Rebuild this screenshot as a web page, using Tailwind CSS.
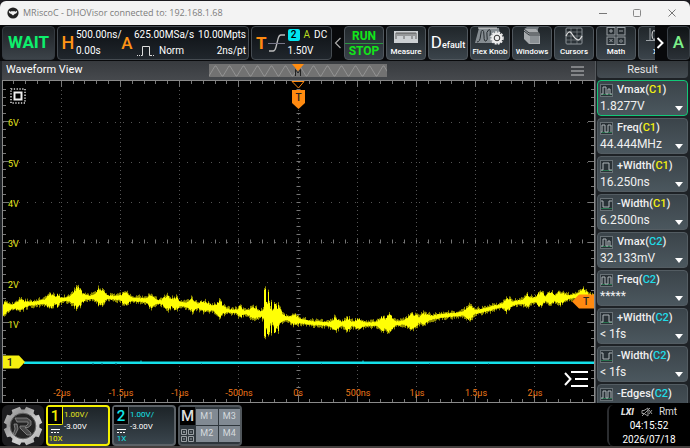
<!DOCTYPE html>
<html lang="en">
<head>
<meta charset="utf-8">
<meta name="viewport" content="width=device-width, initial-scale=1">
<title>MRiscoC - DHOVisor</title>
<script src="https://cdn.jsdelivr.net/npm/@tailwindcss/browser@4"></script>
</head>
<body class="flex h-screen flex-col overflow-hidden bg-[#1b1a1f] font-[Roboto,sans-serif] text-white select-none">

<header class="mt-px flex h-6 shrink-0 items-center rounded-t-md bg-[#f3f3f3] pl-[7px] text-[#7c7c7c]">
  <svg class="mr-1 size-3" viewBox="0 0 12 12"><circle cx="6" cy="6" r="5.6" fill="#222"/><path d="M1.8 3.6Q3 5 4 4.6 5 3.6 6 4.6 7 3.6 8 4.6 9 5 10.2 3.6 10 7 8 6.8L6 8.4 4 6.8Q2 7 1.8 3.6Z" fill="#f3f3f3"/></svg>
  <h1 class="flex-1 font-['Open_Sans',sans-serif] text-[9px]">MRiscoC - DHOVisor connected to: 192.168.1.68</h1>
  <button class="flex w-[34px] justify-center" aria-label="Minimize"><svg class="size-2" viewBox="0 0 8 8"><path d="M0 4.5H8" stroke="#777"/></svg></button>
  <button class="flex w-[34px] justify-center" aria-label="Maximize"><svg class="size-2" viewBox="0 0 8 8"><rect x=".5" y=".5" width="7" height="7" rx="1" fill="none" stroke="#888"/></svg></button>
  <button class="flex w-9 justify-center" aria-label="Close"><svg class="size-2" viewBox="0 0 8 8"><path d="M.5.5l7 7M7.5.5l-7 7" stroke="#777"/></svg></button>
</header>

<nav class="flex h-9 shrink-0 gap-0.5 bg-[#08090b] py-px pl-0.5">
  <button class="w-[53px] shrink-0 rounded-sm border border-[#353b41] bg-linear-to-b from-[#1e2226] to-[#3c4349] text-[17px] font-bold text-[#0df06c]">WAIT</button>
  <section class="flex w-[192px] shrink-0 items-center rounded border border-[#454b51] bg-linear-to-b from-[#0d1014] to-[#20262c] pl-0.5 text-[10px] leading-4 whitespace-nowrap">
    <b class="w-4 text-center text-[18px] font-medium text-[#ff9416]">H</b>
    <p class="w-[45px]">500.00ns/<br>0.00s</p>
    <b class="w-3 text-center text-[17px] font-medium text-[#ff9416]">A</b>
    <div class="flex-1">
      <p class="flex justify-between pr-0.5 pl-px"><span>625.00MSa/s</span><span>10.00Mpts</span></p>
      <p class="flex items-center justify-between pr-0.5 pl-1">
        <span class="flex items-center gap-1"><svg class="h-3 w-[18px]" viewBox="0 0 18 12" fill="none" stroke="#ddd"><path d="M0 10.500H4" stroke-dasharray="1 1"/><path d="M4 10.500H5.500V1.500H12.500V10.500H14"/><path d="M14 10.500H18" stroke-dasharray="1 1"/></svg>Norm</span><span>2ns/pt</span></p>
    </div>
  </section>
  <section class="flex w-[81px] shrink-0 items-center rounded border border-[#454b51] bg-linear-to-b from-[#0d1014] to-[#20262c] pl-1 text-[10px] leading-4">
    <b class="text-[17px] font-bold text-[#ff8a10]">T</b>
    <svg class="h-5 w-[19px]" viewBox="0 0 19 20" fill="none" stroke="#bbb"><path d="M2 18H6Q8 18 9 14L11 6Q12 2 14 2H18" stroke-width="1.300"/><path d="M1 10.500H18" stroke="#778"/></svg>
    <div class="pl-0.5">
      <p class="flex items-center gap-1"><span class="flex h-3 w-3 items-center justify-center rounded-xs bg-[#00e5f0] font-medium text-black">2</span><span class="text-[#b7dc20]">A</span><span>DC</span></p>
      <p>1.50V</p>
    </div>
  </section>
  <div class="flex min-w-0 flex-1 gap-0.5 overflow-hidden text-[8px] leading-[10px] font-medium">
    <button class="flex w-2 shrink-0 items-center justify-center" aria-label="Scroll left"><svg class="h-3 w-2" viewBox="0 0 8 12"><path d="M6.500 1L1.500 6l5 5" fill="none" stroke="#aaa" stroke-width="1.200"/></svg></button>
    <button class="flex w-10 shrink-0 flex-col items-center justify-center rounded border border-[#50575d] bg-linear-to-b from-[#22282c] to-[#39424a] text-[12px] leading-[14px] font-bold text-[#12e51a]"><span class="w-full border-b border-[#2c9340]">RUN</span><span>STOP</span></button>
    <button class="flex w-10 shrink-0 flex-col items-center justify-end rounded border border-[#50575d] bg-linear-to-b from-[#20262a] to-[#3b444b] pb-0.5">
      <svg class="mb-0.5 h-[18px] w-[26px]" viewBox="0 0 26 18"><rect x="1" y="4" width="24" height="12" fill="#ccd0d3"/><path d="M3 6H23M3 6V12M5 6V9M7 6V9M9 6V9M11 6V12M13 6V9M15 6V9M17 6V9M19 6V12M21 6V9M23 6V12" fill="none" stroke="#444" stroke-width=".8"/></svg>Measure</button>
    <button class="flex w-10 shrink-0 items-center justify-center rounded border border-[#50575d] bg-linear-to-b from-[#20262a] to-[#3b444b] text-[9px]"><span><span class="text-[17px] font-normal">D</span>efault</span></button>
    <button class="flex w-10 shrink-0 flex-col items-center justify-end rounded border border-[#50575d] bg-linear-to-b from-[#20262a] to-[#3b444b] pb-0.5 whitespace-nowrap">
      <svg class="mb-0.5 h-[18px] w-[30px]" viewBox="0 0 30 18"><path d="M4 1H24L26 16H0Z" fill="#858c91"/><path d="M2 15Q5 15 5.500 9T7.500 3 9 9 11 14 12 9 13.500 3 15 9" fill="none" stroke="#242a2e"/><path d="M3 1H22" stroke="#ddd"/><circle cx="22" cy="11" r="5.500" fill="#eee"/><circle cx="22" cy="11" r="6" fill="none" stroke="#eee" stroke-width="1.500" stroke-dasharray="2 1.200"/><circle cx="22" cy="11" r="2.800" fill="none" stroke="#333" stroke-width="1"/></svg>Flex Knob</button>
    <button class="flex w-10 shrink-0 flex-col items-center justify-end rounded border border-[#50575d] bg-linear-to-b from-[#20262a] to-[#3b444b] pb-0.5">
      <svg class="mb-0.5 h-[18px] w-5" viewBox="0 0 20 18"><path d="M2 2L5 0H17L16 2V12H2Z" fill="#747b80"/><path d="M2 2H14L18 7V17H7L2 12Z" fill="#a7abae"/><path d="M2 2L7 6H18M2 4L7 8H18" fill="none" stroke="#30363a"/><rect x="8" y="9" width="9" height="7" fill="#8b9195"/></svg>Windows</button>
    <button class="flex w-10 shrink-0 flex-col items-center justify-end rounded border border-[#50575d] bg-linear-to-b from-[#20262a] to-[#3b444b] pb-0.5">
      <svg class="mb-0.5 h-[18px] w-[18px]" viewBox="0 0 18 18" fill="none" stroke="#8d9499"><rect x="1" y="1" width="16" height="16" rx="1"/><path d="M6 1V17M12 1V17M1 9H17M1 5H17M1 13H17" stroke-width=".6"/><path d="M1 9Q4 2 7 7T13 13Q15 13 17 9" stroke="#ddd" stroke-width="1.300"/></svg>Cursors</button>
    <button class="flex w-10 shrink-0 flex-col items-center justify-end rounded border border-[#50575d] bg-linear-to-b from-[#20262a] to-[#3b444b] pb-0.5">
      <svg class="mb-0.5 h-[18px] w-5" viewBox="0 0 20 18" fill="none" stroke="#9ca2a6"><rect x="1" y=".5" width="8" height="7.500"/><rect x="11" y=".5" width="8" height="7.500"/><rect x="1" y="10" width="8" height="7.500"/><rect x="11" y="10" width="8" height="7.500"/><path d="M3 4H7M5 2V6M13 4H17M3.500 12L6.500 15M6.500 12L3.500 15M13 14H17M15 12V12.800M15 15.200V16"/></svg>Math</button>
    <button class="flex w-10 shrink-0 flex-col items-center justify-end rounded border border-[#50575d] bg-linear-to-b from-[#20262a] to-[#3b444b] pb-0.5">
      <svg class="mb-0.5 h-[18px] w-6" viewBox="0 0 24 18" fill="none" stroke="#9ca2a6"><path d="M4 1V14M0 13.500H24"/><ellipse cx="8" cy="8" rx="2" ry="4.500" stroke="#ddd"/></svg>XY</button>
  </div>
  <button class="-ml-0.5 flex w-[10px] shrink-0 items-center justify-center" aria-label="Scroll right"><svg class="h-3 w-2" viewBox="0 0 8 12"><path d="M1.500 1L6.500 6l-5 5" fill="none" stroke="#fff" stroke-width="2"/></svg></button>
  <button class="w-[23px] shrink-0 rounded border border-[#3a4046] bg-linear-to-b from-[#101416] to-[#2b3137] text-[17px] font-medium text-[#7df08a]">A</button>
</nav>

<main class="flex min-h-0 flex-1 bg-[#1e2226]">
  <section class="flex min-w-0 flex-1 flex-col pl-0.5">
    <div class="flex h-[19px] shrink-0 items-center bg-[#404347] bg-linear-to-b from-[#373a3e] to-[#46494d] pl-1">
      <h2 class="flex-1 text-[11px]">Waveform View</h2>
      <svg class="mr-[184px] h-[13px] w-[178px] bg-[#727272]" viewBox="0 0 178 13"><path id="mini" fill="none" stroke="#929292"/><path d="M83 0H95L89 7Z" fill="#ff8c10"/><path d="M86.500 12V5.500L89 9 91.500 5.500V12" fill="none" stroke="#222"/></svg>
      <button class="mr-[11px]" aria-label="Menu"><svg class="h-[10px] w-[13px]" viewBox="0 0 13 10"><path d="M0 1H13M0 5H13M0 9H13" stroke="#c5c6c8"/></svg></button>
    </div>
    <svg id="plot" class="min-h-0 w-full flex-1 bg-black" viewBox="2 80 593 323" role="img" aria-label="Waveform">
      <g stroke="#555" stroke-dasharray="1 7" id="grid"></g>
      <g stroke="#777" id="ticks"></g>
      <path d="M2.500 80V403M594.500 80V403M2 80.500H595M2 402.500H595" stroke="#8a8a8a"/>
      <path d="M24 362.700H594" stroke="#14e0ea" stroke-width="2.600"/>
      <path d="M92 364H94M101 364H103M115 364H117M201 364H202M321 364H322M429 364H430M488 364H489" stroke="#056"/>
      <path d="M141 360.500V362M363 360.500V362" stroke="#14e0ea"/>
      <path id="shade" stroke="#8e8a00"/>
      <path id="wave" stroke="#ffff05"/>
      <g font-family="Roboto, sans-serif" font-size="9" fill="#e6e61c">
        <text x="8" y="126">6V</text><text x="8" y="167">5V</text><text x="8" y="207">4V</text><text x="8" y="247">3V</text><text x="8" y="288">2V</text><text x="8" y="328">1V</text>
      </g>
      <g font-family="Roboto, sans-serif" font-size="9" fill="#f07a1a" text-anchor="middle">
        <text x="62" y="396">-2µs</text><text x="121" y="396">-1.5µs</text><text x="180" y="396">-1µs</text><text x="239" y="396">-500ns</text><text x="298" y="396">0s</text><text x="358" y="396">500ns</text><text x="417" y="396">1µs</text><text x="476" y="396">1.5µs</text><text x="535" y="396">2µs</text>
      </g>
      <path d="M3 355.500H19L25 362 19 368.500H3Z" fill="#f6f010"/>
      <path d="M292 81.500H304L298.500 88Z" fill="#000" stroke="#ff8a10"/>
      <path d="M292 90H305V103L298.500 109 292 103Z" fill="#ff8a10"/>
      <path d="M572 301.500L579 294.500H594V308.500H579Z" fill="#ff8a10"/>
      <g font-family="Roboto, sans-serif" text-anchor="middle" font-weight="500" fill="#222">
        <text x="10" y="366" font-size="11">1</text><text x="298.500" y="101" font-size="10">T</text><text x="586" y="305" font-size="10">T</text>
      </g>
      <rect x="11" y="89" width="14" height="14" fill="none" stroke="#ddd" stroke-width="1.500" stroke-dasharray="1.300 1.500"/>
      <rect x="14.500" y="92.500" width="7" height="7" fill="none" stroke="#eee" stroke-width="2"/>
      <path d="M571 372H588M575 379H588M571 386H588M565 373L570.500 379 565 385" fill="none" stroke="#fff" stroke-width="2"/>
    </svg>
  </section>

  <aside class="flex w-[95px] shrink-0 flex-col overflow-hidden border-l border-[#55595d] pr-0.5 pl-px">
    <h2 class="mb-0.5 h-[17px] shrink-0 rounded-b-sm bg-linear-to-b from-[#34393d] to-[#444c52] text-center text-[11px] leading-[17px] text-[#e4e4e4]">Result</h2>
    <div id="results" class="flex flex-col gap-0.5"></div>
  </aside>
</main>

<footer class="flex h-[45px] shrink-0 items-stretch gap-0.5 border-b-2 border-[#45403f] bg-black pt-0.5 pl-0.5 text-[10px]">
  <button class="flex w-[42px] shrink-0 items-center justify-center rounded-md bg-[#1d1d1f]" aria-label="Home">
    <svg class="h-10 w-10" viewBox="-20 -20 40 40"><defs><linearGradient id="metal" x1="0" y1="0" x2="1" y2="1"><stop offset="0" stop-color="#c4c4c4"/><stop offset=".3" stop-color="#999"/><stop offset=".6" stop-color="#d0d0d0"/><stop offset="1" stop-color="#aaa"/></linearGradient></defs>
      <path id="gear" fill="url(#metal)"/><circle r="12.800" fill="#242424" stroke="#666"/><path d="M-8-8H4L8-5V-1L5 1.500H2L8 7V9H4L-3 2V0H3L5-2V-4H-6ZM-9-2H-6L-5 3 -8 9H-10L-8 3Z" fill="#4a4a4a" stroke="#999" stroke-width=".7"/></svg>
  </button>
  <button class="flex w-16 shrink-0 rounded border-2 border-[#f4f000] bg-linear-to-b from-[#1d2428] to-[#3a454d] text-left">
    <span class="flex w-[15px] flex-col items-center"><b class="h-[18px] w-full rounded-br-xs border-r border-b border-[#f4f000] bg-black text-center text-[15px] leading-[18px] font-medium text-[#f4f000]">1</b>
      <svg class="mt-1 h-1 w-[9px] shrink-0" viewBox="0 0 9 4"><path d="M0 .5H9" stroke="#fff"/><path d="M0 3.500H9" stroke="#fff" stroke-dasharray="2 1"/></svg><span class="text-[8px] leading-[11px] text-[#f4f000]">10X</span></span>
    <span class="pt-0.5 pl-px text-[8px] leading-3"><span class="text-[#e6e61c]">1.00V/</span><br>-3.00V</span>
  </button>
  <button class="flex w-16 shrink-0 rounded border-2 border-[#5c6267] bg-linear-to-b from-[#1d2428] to-[#3a454d] text-left">
    <span class="flex w-[15px] flex-col items-center"><b class="h-[18px] w-full rounded-br-xs border-r border-b border-[#5c6267] bg-black text-center text-[15px] leading-[18px] font-medium text-[#12e4ea]">2</b>
      <svg class="mt-1 h-1 w-[9px] shrink-0" viewBox="0 0 9 4"><path d="M0 .5H9" stroke="#fff"/><path d="M0 3.500H9" stroke="#fff" stroke-dasharray="2 1"/></svg><span class="text-[8px] leading-[11px] text-[#12e4ea]">1X</span></span>
    <span class="pt-0.5 pl-px text-[8px] leading-3"><span class="text-[#12e4ea]">1.00V/</span><br>-3.00V</span>
  </button>
  <div class="flex w-16 shrink-0 rounded border-2 border-[#50565b] bg-[#2e363c]">
    <div class="flex w-[15px] flex-col items-center"><b class="h-[18px] w-full bg-black text-center text-[15px] leading-[18px] font-medium text-[#ddd]">M</b>
      <svg class="mt-1 h-[13px] w-[13px]" viewBox="0 0 13 13" fill="none" stroke="#9ba1a5"><path d="M.5.500h5v5h-5zM7.500.500h5v5h-5zM.500 7.500h5v5h-5zM7.500 7.500h5v5h-5z"/><path d="M2 3H4M3 2V4M9 3H11M2 10H4M9 10H11"/></svg></div>
    <div class="grid flex-1 grid-cols-2 gap-px py-0.5 pl-px text-[9px] text-[#d5dade]">
      <button class="bg-[#818a93]">M1</button><button class="bg-[#818a93]">M3</button><button class="bg-[#818a93]">M2</button><button class="bg-[#818a93]">M4</button>
    </div>
  </div>
  <div class="ml-auto flex w-[83px] shrink-0 flex-col items-center rounded-md border-l-2 border-[#2b2d30] pr-px text-[10px] leading-[14px]">
    <p class="flex items-center gap-1.5 text-[#ddd]"><i class="pr-px text-[9px] font-black">LXI</i>
      <svg class="h-[10px] w-3" viewBox="0 0 12 10" fill="none" stroke="#999"><path d="M1 3.500H3L7 1V9L3 6.500H1ZM8 3L11 7M11 3L8 7M1 9L9 1"/></svg><span>Rmt</span></p>
    <time>04:15:52</time><time>2026/07/18</time>
  </div>
</footer>

<script>
// Measurement cards: label, channel, reading, pulse icon path
const pulse = 'M1 10H3V3H6V10H8V5H10V10H12';
const items = [
  ['Vmax', 1, '1.8277V', pulse], ['Freq', 1, '44.444MHz', 'M1 10H2V3H5V10H8V3H11V10'],
  ['+Width', 1, '16.250ns', 'M1 10H3V3H9V10H12'], ['-Width', 1, '6.2500ns', 'M1 3H3V9H9V3H12'],
  ['Vmax', 2, '32.133mV', pulse], ['Freq', 2, '*****', 'M1 10H2V3H5V10H8V3H11V10'],
  ['+Width', 2, '< 1fs', 'M1 10H3V3H9V10H12'], ['-Width', 2, '< 1fs', 'M1 3H3V9H9V3H12'],
  ['-Edges', 2, '', 'M1 10H3V3H6V10H8V3H11V10']
];
document.getElementById('results').innerHTML = items.map(([n, c, v, d], i) => `
  <button class="flex h-9 shrink-0 flex-col rounded border ${i ? 'border-[#535c62]' : 'border-[#12c878]'} bg-linear-to-b from-[#3b444a] to-[#4b575e] px-0.5 pt-px text-left text-[#f0f0f0]">
    <span class="flex h-4 items-center gap-1 text-[11px] leading-4 font-medium whitespace-nowrap"><svg class="size-[13px]" viewBox="0 0 13 13" fill="none"><rect x=".5" y=".5" width="12" height="12" fill="#293136" stroke="#687176"/><path d="M1 10.500H12" stroke="#29734f"/><path d="${d}" stroke="#aeb5b8"/></svg><span>${n}(<span class="${c === 1 ? 'text-[#f3ef10]' : 'text-[#21dbe6]'}">C${c}</span>)</span></span>
    <span class="flex w-full items-center justify-between pr-0.5 text-[12px] leading-4">${v}<svg class="mt-1 ml-auto h-[5px] w-2" viewBox="0 0 8 5"><path d="M0 0H8L4 5Z" fill="#fff"/></svg></span>
  </button>`).join('');

// Graticule
let g = '', t = '';
for (let i = 1; i < 10; i++) g += `<path d="M${Math.round(2.5 + i * 59.2) - .5} 86V402" stroke-dasharray="1 3"/>`;
for (let y = 121.5; y < 400; y += 40.2) g += `<path d="M3 ${Math.round(y) + .5}H594"/>`;
for (let i = 1; i < 50; i++) {
  const x = Math.round(2.5 + i * 11.84) - .5, l = i % 5 ? 3 : 6;
  t += `<path d="M${x} 81v${l}M${x} 402v-${l}M${x} 239.500v4"/>`;
}
for (let i = 1; i < 40; i++) {
  const y = Math.round(81 + i * 8.04) + .5, l = i % 5 ? 3 : 6;
  t += `<path d="M3 ${y}h${l}M594 ${y}h-${l}M296.500 ${y}h4"/>`;
}
document.getElementById('grid').innerHTML = g;
document.getElementById('ticks').innerHTML = t;

// Channel 1 trace: baseline, then noise bursts [x, half height, spread]
const base = [[2,309],[20,305],[50,301],[77,298],[100,297],[120,298],[150,301],[180,304],[200,306],[230,311],[262,314],[290,319],[310,323],[330,324],[380,324],[400,323],[413,321],[424,319],[440,316],[460,314],[480,311],[500,306],[520,302],[540,299],[560,298],[575,296],[594,297]];
const bursts = [[4,4,4],[20,3,5],[50,5,4],[57,4,2],[77,8,5],[100,7,4],[125,4,4],[151,5,3],[167,5,4],[175,4,4],[192,4,4],[204,3,6],[219,6,4],[240,4,2],[254,4,5],[267,10,4],[276,9,5],[294,3,4],[335,4,4],[347,4,3],[358,3,4],[382,5,4],[389,6,4],[412,5,6],[424,4,4],[469,5,4],[507,4,4],[527,4,3],[540,5,4],[550,4,4],[560,4,5],[583,5,4]];
const spikes = {264:[290,336], 265:[289,337], 266:[302,328], 267:[304,334], 268:[292,335], 269:[303,332], 271:[302,333], 274:[304,333], 275:[304,332], 278:[305,331]};
let seed = 7;
const rnd = () => (seed = seed * 16807 % 2147483647) / 2147483647;
let w = '', s = '';
for (let x = 3; x < 594; x++) {
  const k = base.findIndex(p => p[0] > x), [x0, y0] = base[k - 1], [x1, y1] = base[k];
  const y = y0 + (y1 - y0) * (x - x0) / (x1 - x0);
  const a = 2 + Math.max(...bursts.map(([b, h, r]) => h * Math.exp(-(((x - b) / r) ** 2))));
  let top = y - a * (.7 + rnd() * .5), bot = y + a * (.7 + rnd() * .5);
  if (spikes[x]) [top, bot] = spikes[x];
  w += `M${x + .5} ${top.toFixed(1)}V${bot.toFixed(1)}`;
  s += `M${x + .5} ${(top - rnd() * 3).toFixed(1)}V${(bot + rnd() * 3).toFixed(1)}`;
}
document.getElementById('wave').setAttribute('d', w);
document.getElementById('shade').setAttribute('d', s);

// Overview trace and home gear
let m = 'M0 12';
for (let x = 0; x < 178; x += 14) m += `L${x + 6} 2h1L${x + 13} 12h1`;
document.getElementById('mini').setAttribute('d', m);
let d = '';
for (let i = 0; i < 8; i++) {
  for (const [o, r] of [[-13, 19.500], [13, 19.500], [17, 16.500], [28, 16.500]]) {
    const q = (i * 45 + 22.500 + o) * Math.PI / 180;
    d += (d ? 'L' : 'M') + (r * Math.cos(q)).toFixed(1) + ' ' + (r * Math.sin(q)).toFixed(1);
  }
}
document.getElementById('gear').setAttribute('d', d + 'Z');
</script>
</body>
</html>
